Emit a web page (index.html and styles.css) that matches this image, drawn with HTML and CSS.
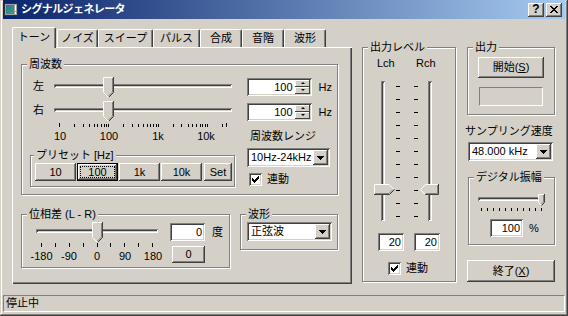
FILE: index.html
```html
<!DOCTYPE html>
<html lang="ja">
<head>
    <meta charset="UTF-8">
    <meta name="viewport" content="width=device-width, initial-scale=1.0">
    <title>シグナルジェネレータ</title>
    <link rel="stylesheet" href="styles.css">
</head>
<body>
    <svg class="defs" width="0" height="0">
        <defs>
            <linearGradient id="iconGrad" x1="0" y1="0" x2="1" y2="1">
                <stop offset="0" stop-color="#2f6fb0"/>
                <stop offset="1" stop-color="#3fa36a"/>
            </linearGradient>
        </defs>
        <symbol id="thumb-down" viewBox="0 0 11 20">
            <path d="M0 0H11V15L5.5 20.5L0 15Z" fill="#d4d0c8"/>
            <path d="M0.5 15V0.5H10" stroke="#fff" fill="none"/>
            <path d="M0.5 15.5L5 20" stroke="#fff" fill="none"/>
            <path d="M9.5 1V15L5.5 19" stroke="#808080" fill="none"/>
            <path d="M10.5 0V15.5L5.5 20.5" stroke="#404040" fill="none"/>
        </symbol>
        <symbol id="thumb-small" viewBox="0 0 7 12">
            <path d="M0 0H7V8L3.5 11.5L0 8Z" fill="#d4d0c8"/>
            <path d="M0.5 8V0.5H6" stroke="#fff" fill="none"/>
            <path d="M0.5 8.5L3 11" stroke="#fff" fill="none"/>
            <path d="M5.5 1V8L3.5 10" stroke="#808080" fill="none"/>
            <path d="M6.5 0V8.5L3.5 11.5" stroke="#404040" fill="none"/>
        </symbol>
        <symbol id="thumb-right" viewBox="0 0 21 11">
            <path d="M0 0H15L20.5 5.5L15 11H0Z" fill="#d4d0c8"/>
            <path d="M0.5 10V0.5H15L19.5 5" stroke="#fff" fill="none"/>
            <path d="M1 9.5H15L19 5.5" stroke="#808080" fill="none"/>
            <path d="M0 10.5H15.5L20.5 5.5" stroke="#404040" fill="none"/>
        </symbol>
        <symbol id="thumb-left" viewBox="0 0 19 11">
            <path d="M0 5.5L5.5 0H19V11H5.5Z" fill="#d4d0c8"/>
            <path d="M5 10.5L0.5 5.5L5.5 0.5H18" stroke="#fff" fill="none"/>
            <path d="M17.5 1V9.5H6" stroke="#808080" fill="none"/>
            <path d="M18.5 0V10.5H5" stroke="#404040" fill="none"/>
        </symbol>
        <symbol id="arrow-down" viewBox="0 0 7 4">
            <path d="M0 0H7V1H6V2H5V3H4V4H3V3H2V2H1V1H0Z" fill="#000"/>
        </symbol>
        <symbol id="check" viewBox="0 0 7 7">
            <path d="M0 2H1V3H2V4H3V3H4V2H5V1H6V0H7V3H6V4H5V5H4V6H3V7H2V6H1V5H0Z" fill="#000"/>
        </symbol>
    </svg>

    <div class="window">
        <div class="titlebar">
            <svg class="app-icon" width="14" height="13" viewBox="0 0 14 13">
                <rect x="0.5" y="0.5" width="13" height="12" fill="#a0a0a0" stroke="#303030"/>
                <rect x="2" y="2" width="8" height="9" fill="url(#iconGrad)"/>
                <rect x="11" y="2" width="1" height="6" fill="#fff"/>
                <rect x="11" y="9" width="1" height="2" fill="#fff"/>
            </svg>
            <span class="title-text">シグナルジェネレータ</span>
            <span class="cap-btn help">?</span>
            <span class="cap-btn close">
                <svg width="8" height="7" viewBox="0 0 8 7"><path d="M0 0h2v1H0z M6 0h2v1H6z M1 1h2v1H1z M5 1h2v1H5z M2 2h4v1H2z M3 3h2v1H3z M2 4h4v1H2z M1 5h2v1H1z M5 5h2v1H5z M0 6h2v1H0z M6 6h2v1H6z" fill="#000"/></svg>
            </span>
        </div>

        <div class="client">
            <div class="tabctl">
                <div class="tabrow">
                    <span class="tab active">トーン</span>
                    <span class="tab tab-noise">ノイズ</span>
                    <span class="tab tab-sweep">スイープ</span>
                    <span class="tab tab-pulse">パルス</span>
                    <span class="tab">合成</span>
                    <span class="tab">音階</span>
                    <span class="tab">波形</span>
                </div>

                <div class="panel">
                    <div class="group freq-group">
                        <span class="group-title">周波数</span>
                        <div class="freq-left">
                            <div class="slider-row">
                                <span class="ch-label">左</span>
                                <div class="hslider freq-slider">
                                    <div class="track"></div>
                                    <svg class="thumb" width="11" height="20" style="left: 49px"><use href="#thumb-down"/></svg>
                                </div>
                            </div>
                            <div class="slider-row second">
                                <span class="ch-label">右</span>
                                <div class="hslider freq-slider">
                                    <div class="track"></div>
                                    <svg class="thumb" width="11" height="20" style="left: 49px"><use href="#thumb-down"/></svg>
                                </div>
                            </div>
                            <div class="ticks freq-ticks" id="freqTicks"></div>
                            <div class="scale freq-scale">
                                <span style="left: 6px">10</span>
                                <span style="left: 55px">100</span>
                                <span style="left: 104px">1k</span>
                                <span style="left: 152px">10k</span>
                            </div>
                            <div class="group preset-group">
                                <span class="group-title">プリセット [Hz]</span>
                                <div class="preset-buttons">
                                    <button class="btn preset">10</button>
                                    <button class="btn preset default"><span class="focus">100</span></button>
                                    <button class="btn preset">1k</button>
                                    <button class="btn preset">10k</button>
                                    <button class="btn set">Set</button>
                                </div>
                            </div>
                        </div>
                        <div class="freq-right">
                            <div class="edit-row">
                                <div class="edit spin-edit">
                                    <span class="val">100</span>
                                    <span class="spin">
                                        <span class="spin-btn up"></span>
                                        <span class="spin-btn down"></span>
                                    </span>
                                </div>
                                <span class="unit">Hz</span>
                            </div>
                            <div class="edit-row second">
                                <div class="edit spin-edit">
                                    <span class="val">100</span>
                                    <span class="spin">
                                        <span class="spin-btn up"></span>
                                        <span class="spin-btn down"></span>
                                    </span>
                                </div>
                                <span class="unit">Hz</span>
                            </div>
                            <div class="field-label">周波数レンジ</div>
                            <div class="combo range-combo">
                                <span class="combo-text">10Hz-24kHz</span>
                                <span class="combo-btn"><svg width="7" height="4"><use href="#arrow-down"/></svg></span>
                            </div>
                            <label class="check-row">
                                <span class="check"><svg width="7" height="7"><use href="#check"/></svg></span>
                                <span>連動</span>
                            </label>
                        </div>
                    </div>

                    <div class="lower-row">
                        <div class="group phase-group">
                            <span class="group-title">位相差 (L - R)</span>
                            <div class="phase-left">
                                <div class="hslider phase-slider">
                                    <div class="track"></div>
                                    <svg class="thumb" width="11" height="20" style="left: 56px"><use href="#thumb-down"/></svg>
                                </div>
                                <div class="ticks phase-ticks" id="phaseTicks"></div>
                                <div class="scale phase-scale">
                                    <span style="left: 5.5px">-180</span>
                                    <span style="left: 33px">-90</span>
                                    <span style="left: 61px">0</span>
                                    <span style="left: 89px">90</span>
                                    <span style="left: 117px">180</span>
                                </div>
                            </div>
                            <div class="phase-right">
                                <div class="edit-row">
                                    <div class="edit phase-edit">0</div>
                                    <span class="unit">度</span>
                                </div>
                                <button class="btn zero-btn">0</button>
                            </div>
                        </div>
                        <div class="group wave-group">
                            <span class="group-title">波形</span>
                            <div class="combo wave-combo">
                                <span class="combo-text">正弦波</span>
                                <span class="combo-btn"><svg width="7" height="4"><use href="#arrow-down"/></svg></span>
                            </div>
                        </div>
                    </div>
                </div>
            </div>

            <div class="group level-group">
                <span class="group-title">出力レベル</span>
                <div class="ch-names">
                    <span>Lch</span>
                    <span>Rch</span>
                </div>
                <div class="vsliders">
                    <div class="vslider left-ch">
                        <div class="vtrack"></div>
                        <svg class="vthumb" width="21" height="11" style="top: 103px"><use href="#thumb-right"/></svg>
                    </div>
                    <div class="dashes" id="dashL"></div>
                    <div class="dashes right" id="dashR"></div>
                    <div class="vslider right-ch">
                        <div class="vtrack"></div>
                        <svg class="vthumb" width="19" height="11" style="top: 103px"><use href="#thumb-left"/></svg>
                    </div>
                </div>
                <div class="level-edits">
                    <div class="edit level-edit">20</div>
                    <div class="edit level-edit">20</div>
                </div>
                <label class="check-row level-check">
                    <span class="check"><svg width="7" height="7"><use href="#check"/></svg></span>
                    <span>連動</span>
                </label>
            </div>

            <div class="side">
                <div class="group out-group">
                    <span class="group-title">出力</span>
                    <button class="btn start-btn">開始(<u>S</u>)</button>
                    <div class="status-box"></div>
                </div>
                <div class="field-label rate-label">サンプリング速度</div>
                <div class="combo rate-combo">
                    <span class="combo-text">48.000 kHz</span>
                    <span class="combo-btn"><svg width="7" height="4"><use href="#arrow-down"/></svg></span>
                </div>
                <div class="group amp-group">
                    <span class="group-title">デジタル振幅</span>
                    <div class="hslider amp-slider">
                        <div class="track"></div>
                        <svg class="thumb" width="7" height="12" style="left: 60px"><use href="#thumb-small"/></svg>
                    </div>
                    <div class="ticks amp-ticks" id="ampTicks"></div>
                    <div class="edit-row amp-row">
                        <div class="edit amp-edit">100</div>
                        <span class="unit">%</span>
                    </div>
                </div>
                <button class="btn exit-btn">終了(<u>X</u>)</button>
            </div>
        </div>

        <div class="statusbar">停止中</div>
    </div>

    <script>
        document.addEventListener('DOMContentLoaded', function() {
            // 周波数 (10Hz - 24kHz, log scale)
            const decade = 49.4;
            const freqs = [];
            for (let d = 10; d <= 10000; d *= 10) {
                for (let m = 1; m <= 9; m++) {
                    if (d * m <= 24000) freqs.push(d * m);
                }
            }
            freqs.push(24000);
            const freqPos = freqs.map(f => Math.round(5 + decade * Math.log10(f / 10)));
            addTicks('freqTicks', freqPos);

            // 位相差 -180 .. 180
            const phasePos = [];
            for (let i = 0; i <= 8; i++) phasePos.push(Math.round(5 + i * 13.875));
            addTicks('phaseTicks', phasePos);

            // デジタル振幅
            const ampPos = [];
            for (let i = 0; i <= 10; i++) ampPos.push(3 + i * 6);
            addTicks('ampTicks', ampPos);

            // 出力レベル dashes
            ['dashL', 'dashR'].forEach(id => {
                const col = document.getElementById(id);
                for (let i = 0; i < 11; i++) {
                    const dash = document.createElement('span');
                    dash.className = 'dash';
                    col.appendChild(dash);
                }
            });
        });

        function addTicks(id, positions) {
            const box = document.getElementById(id);
            positions.forEach((x, i) => {
                const tick = document.createElement('span');
                tick.className = 'tick';
                if (i === 0 || i === positions.length - 1) tick.classList.add('end');
                tick.style.left = x + 'px';
                box.appendChild(tick);
            });
        }
    </script>
</body>
</html>
```

FILE: styles.css
```css
* {
    box-sizing: border-box;
}
body {
    margin: 0;
    background: #d4d0c8;
    font-family: "Liberation Sans", "Noto Sans CJK JP", sans-serif;
    font-size: 11px;
    line-height: 13px;
    color: #000;
}
.defs {
    position: absolute;
}
.window {
    width: 568px;
    height: 316px;
    display: flex;
    flex-direction: column;
    padding: 0 3px 3px 3px;
    background: #d4d0c8;
    box-shadow: inset -1px -1px #404040, inset 1px 1px #d4d0c8, inset -2px -2px #808080, inset 2px 2px #fff;
}

/* title bar */
.titlebar {
    height: 19px;
    flex-shrink: 0;
    display: flex;
    align-items: center;
    padding: 0 3px 0 1px;
    background: linear-gradient(90deg, #0a246a, #a6caf0);
    color: #fff;
    font-weight: bold;
}
.app-icon {
    margin-right: 3px;
}
.title-text {
    line-height: 19px;
    letter-spacing: -0.6px;
}
.cap-btn {
    width: 16px;
    height: 14px;
    display: flex;
    align-items: center;
    justify-content: center;
    background: #d4d0c8;
    color: #000;
    box-shadow: inset -1px -1px #404040, inset 1px 1px #fff, inset -2px -2px #808080;
}
.help {
    margin-left: auto;
    font-size: 12px;
    font-weight: bold;
}
.close {
    margin-left: 2px;
}

/* layout */
.client {
    display: flex;
    align-items: flex-start;
}
.tabctl {
    margin: 8px 0 0 9px;
}
.tabrow {
    height: 20px;
    display: flex;
    align-items: flex-end;
}
.tab {
    width: 42px;
    height: 18px;
    text-align: center;
    line-height: 16px;
    border-top: 1px solid #fff;
    border-left: 1px solid #fff;
    border-right: 1px solid #404040;
    border-radius: 2px 2px 0 0;
    box-shadow: inset -1px 0 #808080;
}
.tab.active {
    width: 44px;
    height: 21px;
    margin-bottom: -1px;
    line-height: 18px;
    position: relative;
    z-index: 1;
    background: #d4d0c8;
}
.tab-noise {
    width: 41px;
    margin-left: 1px;
}
.tab-sweep {
    width: 55px;
}
.tab-pulse {
    width: 47px;
}
.panel {
    width: 340px;
    height: 237px;
    padding: 17px 0 0 9px;
    box-shadow: inset 1px 1px #fff, inset -1px -1px #404040, inset -2px -2px #808080;
}

/* group boxes */
.group {
    position: relative;
    border: 1px solid #808080;
    box-shadow: inset 1px 1px #fff, 1px 1px #fff;
}
.group-title {
    position: absolute;
    top: -7px;
    left: 5px;
    padding: 0 2px;
    background: #d4d0c8;
    white-space: nowrap;
}

/* 周波数 */
.freq-group {
    width: 317px;
    height: 131px;
    display: flex;
    padding: 12px 0 0 8px;
}
.freq-left {
    width: 206px;
}
.slider-row {
    display: flex;
    height: 20px;
}
.slider-row.second {
    margin-top: 4px;
}
.ch-label {
    width: 24px;
    padding-left: 3px;
    line-height: 19px;
}
.hslider {
    position: relative;
    height: 20px;
}
.hslider .track {
    position: absolute;
    left: 0;
    right: 0;
    top: 7px;
    height: 4px;
    box-shadow: inset 1px 1px #808080, inset -1px -1px #fff, inset 2px 2px #404040, inset -2px -2px #d4d0c8;
}
.thumb {
    position: absolute;
    top: 0;
}
.freq-slider {
    width: 178px;
}
.ticks {
    position: relative;
    height: 4px;
}
.tick {
    position: absolute;
    top: 1px;
    width: 1px;
    height: 3px;
    background: #000;
}
.tick.end {
    top: 0;
    height: 4px;
}
.freq-ticks {
    width: 178px;
    margin: 2px 0 0 24px;
}
.scale {
    position: relative;
    height: 13px;
    margin-top: 3px;
}
.scale span {
    position: absolute;
    top: 0;
    transform: translateX(-50%);
    white-space: nowrap;
}
.freq-scale {
    width: 178px;
    margin-left: 24px;
}
.preset-group {
    width: 205px;
    height: 32px;
    margin-top: 12px;
    padding: 7px 0 0 4px;
}
.preset-group .group-title {
    left: 3px;
}
.preset-buttons {
    display: flex;
    gap: 1px;
}
.btn {
    font: inherit;
    color: #000;
    background: #d4d0c8;
    border: 0;
    padding: 0;
    text-align: center;
    box-shadow: inset -1px -1px #404040, inset 1px 1px #fff, inset -2px -2px #808080;
}
.preset {
    width: 41px;
    height: 18px;
}
.btn.default {
    padding: 3px;
    box-shadow: inset 0 0 0 1px #000, inset -2px -2px #404040, inset 2px 2px #fff, inset -3px -3px #808080;
}
.focus {
    display: block;
    height: 100%;
    border: 1px dotted #000;
    line-height: 10px;
}
.set {
    width: 28px;
    height: 18px;
    margin-left: 1px;
}
.freq-right {
    width: 85px;
    margin-left: 11px;
}
.edit-row {
    display: flex;
    align-items: center;
    margin-top: 1px;
}
.edit-row.second {
    margin-top: 7px;
}
.edit {
    height: 18px;
    padding: 0 3px;
    background: #fff;
    text-align: right;
    line-height: 18px;
    box-shadow: inset 1px 1px #808080, inset -1px -1px #fff, inset 2px 2px #404040, inset -2px -2px #d4d0c8;
}
.unit {
    margin-left: 7px;
}
.spin-edit {
    width: 65px;
    display: flex;
    padding: 2px 2px 2px 2px;
}
.spin-edit .val {
    flex: 1;
    line-height: 14px;
    padding-right: 2px;
}
.spin {
    width: 15px;
    display: flex;
    flex-direction: column;
}
.spin-btn {
    height: 7px;
    background: #d4d0c8;
    box-shadow: inset -1px -1px #404040, inset 1px 1px #fff;
    position: relative;
}
.spin-btn::after {
    content: '';
    position: absolute;
    left: 6px;
    top: 2px;
    border-left: 2px solid transparent;
    border-right: 2px solid transparent;
}
.spin-btn.up::after {
    border-bottom: 2px solid #000;
}
.spin-btn.down::after {
    border-top: 2px solid #000;
}
.field-label {
    margin-top: 9px;
    padding-left: 3px;
}
.combo {
    height: 19px;
    display: flex;
    padding: 2px;
    background: #fff;
    box-shadow: inset 1px 1px #808080, inset -1px -1px #fff, inset 2px 2px #404040, inset -2px -2px #d4d0c8;
}
.combo-text {
    flex: 1;
    padding-left: 2px;
    line-height: 15px;
    white-space: nowrap;
}
.combo-btn {
    width: 15px;
    display: flex;
    align-items: center;
    justify-content: center;
    background: #d4d0c8;
    box-shadow: inset -1px -1px #404040, inset 1px 1px #fff, inset -2px -2px #808080;
}
.range-combo {
    width: 83px;
    margin-top: 5px;
}
.check-row {
    display: flex;
    align-items: center;
    margin-top: 6px;
    padding-left: 2px;
}
.check {
    width: 13px;
    height: 13px;
    margin-right: 5px;
    display: flex;
    align-items: center;
    justify-content: center;
    background: #fff;
    box-shadow: inset 1px 1px #808080, inset -1px -1px #fff, inset 2px 2px #404040, inset -2px -2px #d4d0c8;
}

/* 位相差 / 波形 */
.lower-row {
    display: flex;
    align-items: flex-start;
    margin-top: 19px;
}
.phase-group {
    width: 209px;
    height: 54px;
    display: flex;
    padding: 7px 0 0 14px;
}
.phase-left {
    width: 122px;
}
.phase-slider {
    width: 122px;
}
.phase-ticks {
    width: 122px;
    margin-top: 1px;
}
.phase-ticks .tick {
    top: 0;
    height: 4px;
}
.phase-right {
    margin-left: 12px;
}
.phase-edit {
    width: 35px;
}
.zero-btn {
    display: block;
    width: 33px;
    height: 17px;
    margin: 5px 0 0 2px;
}
.wave-group {
    width: 98px;
    height: 36px;
    margin-left: 10px;
    padding: 7px 0 0 6px;
}
.wave-combo {
    width: 85px;
}

/* 出力レベル */
.level-group {
    width: 94px;
    height: 235px;
    margin: 28px 0 0 10px;
    padding-top: 9px;
}
.ch-names {
    display: flex;
    padding-left: 14px;
}
.ch-names span {
    width: 41px;
}
.vsliders {
    display: flex;
    margin-top: 11px;
}
.vslider {
    position: relative;
    width: 22px;
    height: 140px;
}
.vslider.left-ch {
    margin-left: 11px;
}
.vslider.right-ch {
    margin-left: 2px;
}
.vtrack {
    position: absolute;
    top: 0;
    bottom: 0;
    left: 7px;
    width: 4px;
    box-shadow: inset 1px 1px #808080, inset -1px -1px #fff, inset 2px 2px #404040, inset -2px -2px #d4d0c8;
}
.right-ch .vtrack {
    left: 8px;
}
.vthumb {
    position: absolute;
    left: 0;
}
.dashes {
    width: 4px;
    height: 131px;
    margin-top: 5px;
    display: flex;
    flex-direction: column;
    justify-content: space-between;
}
.dashes.right {
    margin-left: 14px;
}
.dash {
    height: 1px;
    background: #000;
}
.level-edits {
    display: flex;
    gap: 10px;
    margin: 12px 0 0 15px;
}
.level-edit {
    width: 26px;
}
.level-check {
    margin: 11px 0 0 25px;
    padding-left: 0;
}

/* right side */
.side {
    width: 92px;
    margin: 28px 0 0 8px;
}
.out-group {
    width: 88px;
    height: 68px;
    margin-left: 3px;
    padding: 9px 0 0 10px;
}
.start-btn {
    display: block;
    width: 66px;
    height: 21px;
}
.status-box {
    width: 64px;
    height: 19px;
    margin: 9px 0 0 1px;
    border: 1px solid;
    border-color: #808080 #fff #fff #808080;
}
.rate-label {
    margin-top: 10px;
    padding-left: 1px;
}
.rate-combo {
    width: 85px;
    margin: 4px 0 0 4px;
}
.amp-group {
    width: 87px;
    height: 68px;
    margin: 16px 0 0 4px;
    padding: 16px 0 0 9px;
}
.amp-slider {
    width: 67px;
    height: 12px;
}
.amp-slider .track {
    top: 3px;
}
.amp-ticks {
    width: 67px;
    height: 3px;
    margin-top: 2px;
}
.amp-ticks .tick,
.amp-ticks .tick.end {
    top: 0;
    height: 3px;
}
.amp-row {
    margin: 8px 0 0 12px;
}
.amp-edit {
    width: 33px;
}
.amp-row .unit {
    margin-left: 6px;
}
.exit-btn {
    display: block;
    width: 88px;
    height: 22px;
    margin: 15px 0 0 3px;
}

/* status bar */
.statusbar {
    height: 17px;
    margin-top: auto;
    margin-bottom: 1px;
    padding-left: 2px;
    line-height: 15px;
    border: 1px solid;
    border-color: #808080 #fff #fff #808080;
}
```
